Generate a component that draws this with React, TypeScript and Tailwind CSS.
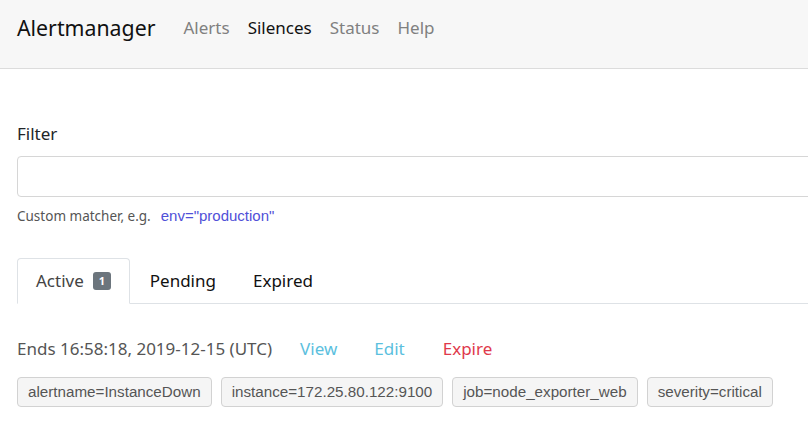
import React from 'react'

const labels = [
  'alertname=InstanceDown',
  'instance=172.25.80.122:9100',
  'job=node_exporter_web',
  'severity=critical',
]

const ui = { fontFamily: '"Noto Sans", "Open Sans", sans-serif' }
const arial = { fontFamily: '"Liberation Sans", Arial, sans-serif' }

export default function App() {
  return (
    <div className="w-[808px] h-[432px] overflow-hidden bg-white text-[#212529]" style={ui}>
      {/* Navbar */}
      <nav className="h-[69px] pb-[13px] bg-[#f7f7f7] border-b border-[#dcdcdc] flex items-center px-[17px]">
        <span className="text-[21.3px] text-[#111] mr-[28px] leading-none">Alertmanager</span>
        <div className="flex gap-[18px] text-[17px] leading-none">
          <a className="text-[#808080]">Alerts</a>
          <a className="text-[#111]">Silences</a>
          <a className="text-[#808080]">Status</a>
          <a className="text-[#808080]">Help</a>
        </div>
      </nav>

      <main className="w-[1000px] pl-[17px] pt-[53px]">
        {/* Filter */}
        <label className="block text-[17px] leading-6 text-[#212529]">Filter</label>
        <div className="mt-[10px] h-[41px] border border-[#d6d6d6] rounded-[4px]" />
        <div className="mt-[9px] flex items-center text-[13.5px] text-[#555] leading-5">
          Custom matcher, e.g.
          <span className="ml-[10px] text-[15px] text-[#5050d8]" style={arial}>
            env="production"
          </span>
        </div>

        {/* Tabs */}
        <div className="mt-[32px] flex border-b border-[#dee2e6]">
          <div className="-mb-px h-[46px] pl-[18px] pr-[18px] flex items-center border border-[#dee2e6] border-b-white bg-white rounded-t-[4px] text-[17px] text-[#444]">
            Active
            <span className="ml-[9px] h-[18px] min-w-[18px] px-[5px] rounded-[3px] bg-[#6c757d] text-white text-[11px] font-bold flex items-center justify-center">
              1
            </span>
          </div>
          <div className="h-[45px] pl-[20px] pr-[19px] flex items-center text-[17px] text-[#111]">Pending</div>
          <div className="h-[45px] px-[18px] flex items-center text-[17px] text-[#111]">Expired</div>
        </div>

        {/* Silence row */}
        <div className="mt-[33px] flex items-center text-[17px] leading-6">
          <span className="text-[#555]">Ends 16:58:18, 2019-12-15 (UTC)</span>
          <a className="ml-[28px] text-[#5bc0de]">View</a>
          <a className="ml-[37px] text-[#5bc0de]">Edit</a>
          <a className="ml-[38px] text-[#e0394b]">Expire</a>
        </div>
        <div className="mt-[16px] flex gap-[9px]" style={arial}>
          {labels.map((l) => (
            <span
              key={l}
              className="h-[30px] px-[10px] flex items-center rounded-[4px] border border-[#d2d2d2] bg-[#f5f5f5] text-[15.2px] text-[#555]"
            >
              {l}
            </span>
          ))}
        </div>
      </main>
    </div>
  )
}
